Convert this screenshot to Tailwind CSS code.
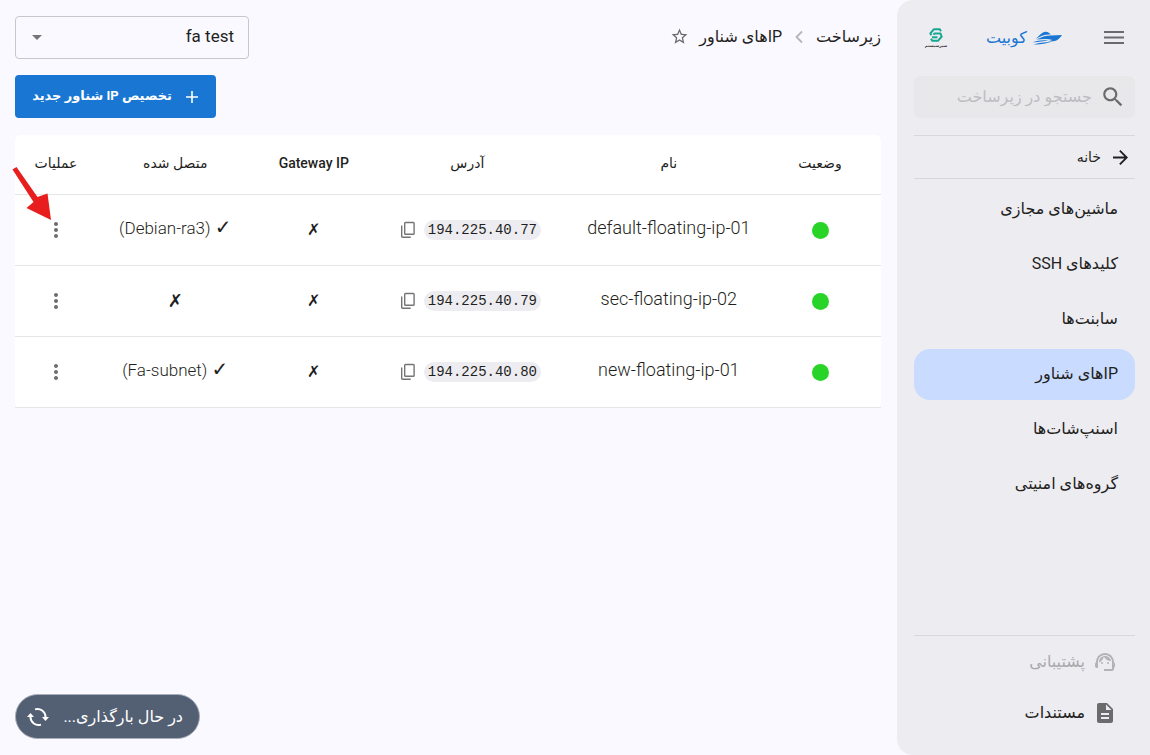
<!DOCTYPE html>
<html lang="fa" dir="rtl">
<head>
<meta charset="utf-8">
<meta name="viewport" content="width=device-width, initial-scale=1">
<title>IPهای شناور</title>
<script src="https://cdn.jsdelivr.net/npm/@tailwindcss/browser@4"></script>
</head>
<body class="bg-[#faf9ff] text-[#1f1f22] font-[Roboto,'DejaVu_Sans',sans-serif] text-base">
<svg class="hidden">
  <symbol id="copy" viewBox="0 0 16 18"><path d="M5.500 1.500h7.800a.8.8 0 0 1 .8.8v10.200a.8.8 0 0 1-.8.8H5.500a.8.8 0 0 1-.8-.8V2.300a.8.8 0 0 1 .8-.8zM1.700 4.500v11a.8.8 0 0 0 .8.8h8.200" fill="none" stroke="#757578" stroke-width="1.400"/></symbol>
  <symbol id="dots" viewBox="0 0 24 24"><path fill="#6d6d70" d="M12 8c1.100 0 2-.9 2-2s-.9-2-2-2-2 .9-2 2 .9 2 2 2zm0 2c-1.100 0-2 .9-2 2s.9 2 2 2 2-.9 2-2-.9-2-2-2zm0 6c-1.100 0-2 .9-2 2s.9 2 2 2 2-.9 2-2-.9-2-2-2z"/></symbol>
</svg>
<div class="flex min-h-screen">

  <aside class="w-[253px] shrink-0 bg-[#edecf1] rounded-l-2xl pr-[15px] pl-[17px] flex flex-col">
    <div class="flex items-center justify-between h-[76px] pr-2 pl-[10px]">
      <button type="button" aria-label="منو" class="block">
        <svg class="w-[26px] h-6" viewBox="0 0 26 24" fill="#6b6b6e"><path d="M3 5h20v2H3zM3 10.500h20v2H3zM3 16h20v2H3z"/></svg>
      </button>
      <a href="#" class="flex items-center gap-1 text-[#1976d2]">
        <svg class="w-8 h-4" viewBox="0 0 32 16" fill="currentColor"><path d="M4.500 9C7 7.500 9 3.300 13.500 2c2.600-.7 4.500.6 6.300 2.600-4.800-.5-9 .9-15.300 4.400z"/><path d="M5.500 9.600C10 7 14.500 5.600 20 5.500l11-.6c-1.800 3-4.200 5.200-7.200 6.200-2.500.5-5 .4-7.300.5l5-1.700c-5-1.400-10.500-.8-16-.3z"/><path d="M1.500 12.200c5-1.800 10.500-2.500 16-1.700-5.500.5-10.500 2-16 1.700zM2 14.300c5-1 9.500-2.500 18-2.100-5.500 1.400-12 2.600-18 2.100z"/></svg>
        <span class="text-base font-medium">کوبیت</span>
      </a>
      <a href="#" aria-label="سیزسیستم" class="flex flex-col items-center w-6">
        <svg class="w-4 h-[14px]" viewBox="0 0 16 14" fill="none" stroke="#16a692" stroke-width="2" stroke-linejoin="round"><path d="M13 3.200 11.800 1.300H5.800L2.300 5.500l1.200 1.700"/><path d="M3 10.800l1.200 1.900h6L13.700 8.500l-1.200-3H6.500L5.600 6.800"/><path d="M4 9.300h5.500"/></svg>
        <span class="text-[4px] leading-[7px] font-bold text-[#333] whitespace-nowrap">سیزسیستم</span>
      </a>
    </div>

    <label class="flex items-center h-[42px] rounded-md bg-[#e8e8ea] pr-[9px] gap-2">
      <svg class="size-[26px] shrink-0" viewBox="0 0 24 24" fill="#6b6b6e"><path d="M15.500 14h-.79l-.28-.27C15.410 12.590 16 11.110 16 9.500 16 5.910 13.090 3 9.500 3S3 5.910 3 9.500 5.910 16 9.500 16c1.610 0 3.090-.59 4.230-1.570l.27.28v.79l5 4.990L20.490 19l-4.990-5zm-6 0C7.010 14 5 11.990 5 9.500S7.010 5 9.500 5 14 7.010 14 9.500 11.990 14 9.500 14z"/></svg>
      <input type="search" aria-label="جستجو" placeholder="جستجو در زیرساخت" class="min-w-0 flex-1 bg-transparent outline-none text-base placeholder:text-[#bdbdc1]">
    </label>

    <a href="#" class="mt-[17px] h-11 border-y border-[#d8d7dc] flex items-center gap-3 pr-[7px] text-sm">
      <svg class="size-[15px]" viewBox="4 4 16 16" fill="#1f1f22"><path d="m12 4-1.410 1.410L16.170 11H4v2h12.170l-5.580 5.590L12 20l8-8z"/></svg>
      <span>خانه</span>
    </a>

    <nav class="mt-[5px] flex flex-col gap-1 text-base">
      <a href="#" class="h-[51px] flex items-center pr-[17px] pb-0.5 rounded-2xl">ماشین‌های مجازی</a>
      <a href="#" class="h-[51px] flex items-center pr-[17px] pb-0.5 rounded-2xl">کلیدهای SSH</a>
      <a href="#" class="h-[51px] flex items-center pr-[17px] pb-0.5 rounded-2xl">سابنت‌ها</a>
      <a href="#" aria-current="page" class="h-[51px] flex items-center pr-[17px] pb-0.5 rounded-2xl bg-[#c9dbff]">IPهای شناور</a>
      <a href="#" class="h-[51px] flex items-center pr-[17px] pb-0.5 rounded-2xl">اسنپ‌شات‌ها</a>
      <a href="#" class="h-[51px] flex items-center pr-[17px] pb-0.5 rounded-2xl">گروه‌های امنیتی</a>
    </nav>

    <div class="mt-auto border-t border-[#d8d7dc] pb-[17px] text-base">
      <a href="#" class="h-[51px] flex items-center gap-2 pr-[18px] text-[#a9a9ad]">
        <svg class="size-6" viewBox="0 0 24 24" fill="#b3b3b6"><path d="M21 12.220C21 6.730 16.740 3 12 3c-4.690 0-9 3.650-9 9.280-.6.340-1 .98-1 1.720v2c0 1.100.9 2 2 2h1v-6.100c0-3.870 3.130-7 7-7s7 3.130 7 7V19h-8v2h8c1.100 0 2-.9 2-2v-1.220c.59-.31 1-.92 1-1.640v-2.300c0-.7-.41-1.310-1-1.620z"/><circle cx="9" cy="13" r="1"/><circle cx="15" cy="13" r="1"/><path d="M18 11.030C17.520 8.180 15.040 6 12.050 6c-3.030 0-6.290 2.510-6.030 6.450 2.470-1.010 4.330-3.210 4.860-5.890 1.310 2.630 4 4.440 7.120 4.470z"/></svg>
        <span>پشتیبانی</span>
      </a>
      <a href="#" class="h-[51px] flex items-center gap-2 pr-[18px]">
        <svg class="size-6" viewBox="0 0 24 24" fill="#6b6b6e"><path d="M14 2H6c-1.100 0-1.990.9-1.990 2L4 20c0 1.100.89 2 1.990 2H18c1.100 0 2-.9 2-2V8l-6-6zm2 16H8v-2h8v2zm0-4H8v-2h8v2zm-3-5V3.500L18.500 9H13z"/></svg>
        <span>مستندات</span>
      </a>
    </div>
  </aside>

  <main class="relative flex-1 min-w-0 pr-4 pl-[15px] pt-4">
    <div class="flex items-center justify-between">
      <nav class="flex items-center pb-0.5" aria-label="مسیر">
        <a href="#">زیرساخت</a>
        <svg class="mx-[11px] w-3 h-4" viewBox="0 0 12 16" fill="none" stroke="#b5b5ba" stroke-width="1.800"><path d="M9 2.500 3.500 8 9 13.500"/></svg>
        <a href="#">IPهای شناور</a>
        <button type="button" aria-label="نشان کردن" class="mr-[10px]">
          <svg class="block size-[19px]" viewBox="0 0 24 24" fill="#6b6b6e"><path d="m22 9.240-7.190-.62L12 2 9.190 8.630 2 9.240l5.460 4.730L5.820 21 12 17.270 18.180 21l-1.630-7.030L22 9.240zM12 15.400l-3.760 2.270 1-4.280-3.320-2.880 4.380-.38L12 6.100l1.710 4.040 4.380.38-3.320 2.880 1 4.280L12 15.400z"/></svg>
        </button>
      </nav>
      <div class="relative w-[234px]">
        <select aria-label="پروژه" class="block w-full h-[43px] appearance-none rounded border border-[#c8c7cc] bg-transparent pr-[14px] pl-10 pb-0.5 text-[17px]">
          <option>fa test</option>
        </select>
        <svg class="absolute left-[10px] top-[9px] size-6 pointer-events-none" viewBox="0 0 24 24" fill="#757578"><path d="m7 10 5 5 5-5z"/></svg>
      </div>
    </div>

    <div class="mt-4 flex justify-end">
      <button type="button" class="flex items-center gap-[10px] h-[43px] w-[201px] pr-[14px] rounded bg-[#1976d2] text-white text-[13px] font-bold whitespace-nowrap">
        <svg class="size-5 shrink-0" viewBox="0 0 20 20" stroke="#fff" stroke-width="1.600"><path d="M10 4v12M4 10h12"/></svg>
        <span class="pb-0.5">تخصیص IP شناور جدید</span>
      </button>
    </div>

    <table class="mt-[17px] w-full table-fixed border-separate border-spacing-0 rounded-md bg-white text-center">
      <colgroup>
        <col class="w-[12%]"><col class="w-[25%]"><col class="w-[22%]"><col class="w-[13%]"><col class="w-[19%]"><col class="w-[9%]">
      </colgroup>
      <thead>
        <tr class="h-[60px] text-sm">
          <th scope="col" class="border-b border-[#e6e6e9] font-medium pb-1 pr-[18px]">وضعیت</th>
          <th scope="col" class="border-b border-[#e6e6e9] font-medium pb-1">نام</th>
          <th scope="col" class="border-b border-[#e6e6e9] font-medium pb-1 pl-1">آدرس</th>
          <th scope="col" class="border-b border-[#e6e6e9] font-medium pb-1">Gateway IP</th>
          <th scope="col" class="border-b border-[#e6e6e9] font-medium pb-1">متصل شده</th>
          <th scope="col" class="border-b border-[#e6e6e9] font-medium pb-1 pl-1">عملیات</th>
        </tr>
      </thead>
      <tbody>
        <tr class="h-[71px]">
          <td class="border-b border-[#e6e6e9] pr-[18px]"><span role="img" aria-label="فعال" class="block mx-auto size-[17px] rounded-full bg-[#28d428]"></span></td>
          <td class="border-b border-[#e6e6e9] pb-1 text-lg font-light" dir="ltr">default-floating-ip-01</td>
          <td class="border-b border-[#e6e6e9] pl-[10px]"><div class="flex items-center justify-center gap-2"><code class="rounded-full bg-[#edecf1] px-1 leading-5 text-sm font-['Liberation_Mono',monospace]">194.225.40.77</code><button type="button" aria-label="کپی"><svg class="block w-4 h-[18px]"><use href="#copy"/></svg></button></div></td>
          <td class="border-b border-[#e6e6e9]">✗</td>
          <td class="border-b border-[#e6e6e9] pb-1 text-[17px] font-light" dir="ltr">(Debian-ra3) <span class="text-xl leading-6 font-bold">✓</span></td>
          <td class="border-b border-[#e6e6e9] pl-1"><button type="button" aria-label="عملیات" class="align-middle"><svg class="block size-6"><use href="#dots"/></svg></button></td>
        </tr>
        <tr class="h-[71px]">
          <td class="border-b border-[#e6e6e9] pr-[18px]"><span role="img" aria-label="فعال" class="block mx-auto size-[17px] rounded-full bg-[#28d428]"></span></td>
          <td class="border-b border-[#e6e6e9] pb-1 text-lg font-light" dir="ltr">sec-floating-ip-02</td>
          <td class="border-b border-[#e6e6e9] pl-[10px]"><div class="flex items-center justify-center gap-2"><code class="rounded-full bg-[#edecf1] px-1 leading-5 text-sm font-['Liberation_Mono',monospace]">194.225.40.79</code><button type="button" aria-label="کپی"><svg class="block w-4 h-[18px]"><use href="#copy"/></svg></button></div></td>
          <td class="border-b border-[#e6e6e9]">✗</td>
          <td class="border-b border-[#e6e6e9] text-lg">✗</td>
          <td class="border-b border-[#e6e6e9] pl-1"><button type="button" aria-label="عملیات" class="align-middle"><svg class="block size-6"><use href="#dots"/></svg></button></td>
        </tr>
        <tr class="h-[71px]">
          <td class="border-b border-[#e6e6e9] pr-[18px]"><span role="img" aria-label="فعال" class="block mx-auto size-[17px] rounded-full bg-[#28d428]"></span></td>
          <td class="border-b border-[#e6e6e9] pb-1 text-lg font-light" dir="ltr">new-floating-ip-01</td>
          <td class="border-b border-[#e6e6e9] pl-[10px]"><div class="flex items-center justify-center gap-2"><code class="rounded-full bg-[#edecf1] px-1 leading-5 text-sm font-['Liberation_Mono',monospace]">194.225.40.80</code><button type="button" aria-label="کپی"><svg class="block w-4 h-[18px]"><use href="#copy"/></svg></button></div></td>
          <td class="border-b border-[#e6e6e9]">✗</td>
          <td class="border-b border-[#e6e6e9] pb-1 text-[17px] font-light" dir="ltr">(Fa-subnet) <span class="text-xl leading-6 font-bold">✓</span></td>
          <td class="border-b border-[#e6e6e9] pl-1"><button type="button" aria-label="عملیات" class="align-middle"><svg class="block size-6"><use href="#dots"/></svg></button></td>
        </tr>
      </tbody>
    </table>

    <svg class="absolute left-3 top-[167px] w-10 h-[54px] pointer-events-none" viewBox="0 0 40 54" fill="#e81e1e"><path d="M.5 2.500 4.500 0 25.500 30 35.500 26.500 39 53 14.500 41 21.500 35z"/></svg>

    <div role="status" class="absolute left-[15px] bottom-4 flex items-center justify-between w-[185px] h-[45px] rounded-full border border-[#a9aeb9] bg-[#535f72] text-white text-base pr-4 pl-[10px] whitespace-nowrap">
      <span>در حال بارگذاری...</span>
      <svg class="size-6" viewBox="0 0 24 24" fill="none" stroke="#fff" stroke-width="2"><path d="M9 4.400A8 8 0 0 1 19.500 12v1.500M15 19.600A8 8 0 0 1 4.500 12v-1.500"/><path d="M16 12 19.500 16l3.500-4zM1 12 4.500 8 8 12z" fill="#fff" stroke="none"/></svg>
    </div>
  </main>
</div>
</body>
</html>
